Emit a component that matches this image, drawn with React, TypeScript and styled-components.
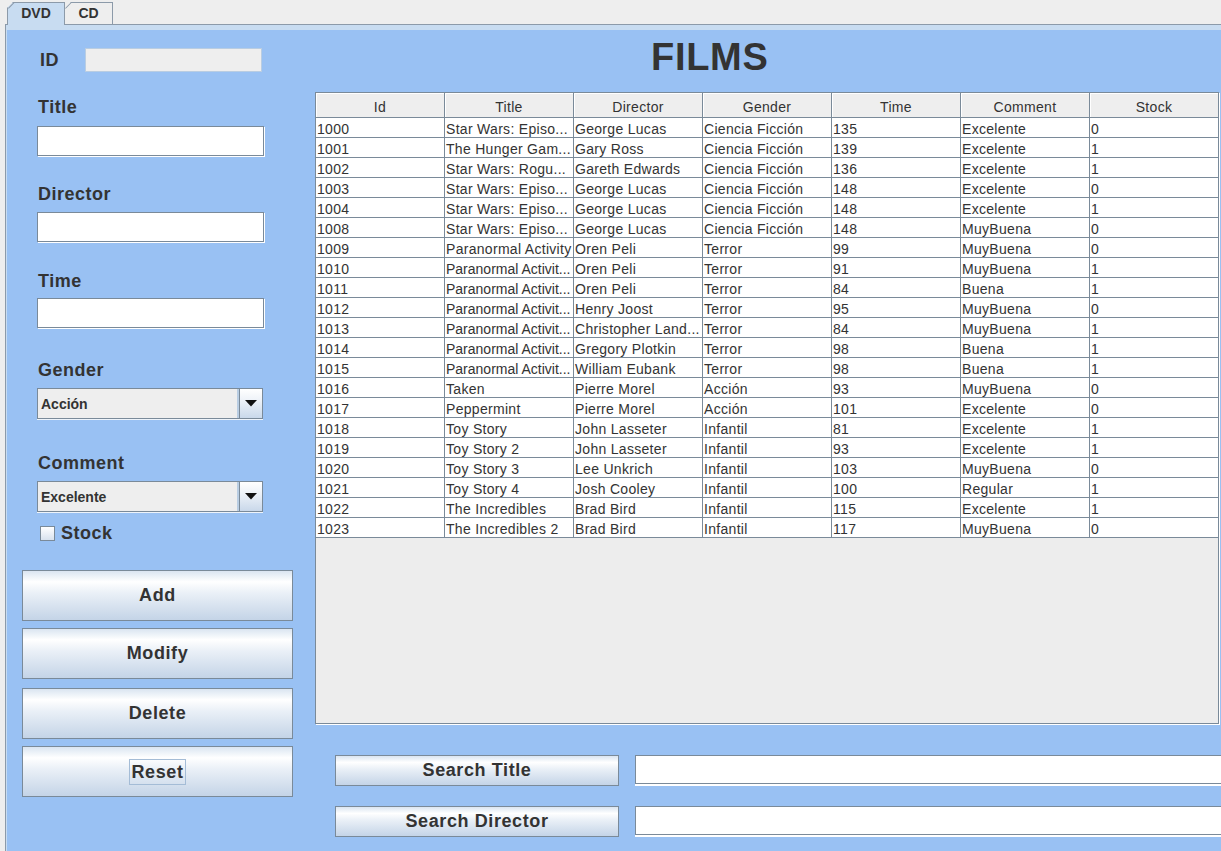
import React from "react";
import styled, { createGlobalStyle } from "styled-components";

const GlobalStyle = createGlobalStyle`
  html, body { margin: 0; padding: 0; background: #eeeeee; }
  body { font-family: "Liberation Sans", Arial, sans-serif; color: #333333; }
  * { box-sizing: border-box; }
`;

const LINE = "#7a8a99";
const BLUE = "#99c1f3";
const BAND = "#c8dcf1";

const Page = styled.div`
  width: 1221px;
  height: 851px;
  overflow: hidden;
  background: #eeeeee;
  display: flex;
  flex-direction: column;
`;

const TabStrip = styled.div`
  height: 24px;
  display: flex;
  align-items: flex-end;
  padding-left: 7px;
  flex: none;
`;

const Tab = styled.div<{ $selected?: boolean; $w: number }>`
  position: relative;
  width: ${(p) => p.$w}px;
  height: ${(p) => (p.$selected ? 23 : 22)}px;
  margin-bottom: ${(p) => (p.$selected ? -1 : 0)}px;
  z-index: ${(p) => (p.$selected ? 2 : 1)};
  background: ${(p) => (p.$selected ? BAND : "#eeeeee")};
  border: 1px solid #8c9aa9;
  border-bottom: none;
  border-left-width: ${(p) => (p.$selected ? 1 : 0)}px;
  clip-path: polygon(6px 0, 100% 0, 100% 100%, 0 100%, 0 6px);
  font-size: 14px;
  font-weight: bold;
  line-height: 20px;
  text-align: center;
  color: #333333;
  &::before {
    content: "";
    position: absolute;
    left: 0;
    top: 5px;
    width: 8px;
    height: 1px;
    background: #8c9aa9;
    transform-origin: 0 0;
    transform: rotate(-45deg);
  }
`;

const Panel = styled.div`
  margin-left: 5px;
  border-top: 1px solid #8c9aa9;
  border-left: 1px solid #8c9aa9;
  background: ${BAND};
  padding: 5px 0 0 1px;
  flex: 1;
  display: flex;
  min-height: 0;
`;

const Surface = styled.div`
  flex: 1;
  background: ${BLUE};
  display: grid;
  grid-template-columns: 286px 1fr;
  overflow: hidden;
`;

const FormColumn = styled.div`
  display: flex;
  flex-direction: column;
  padding-left: 15px;
`;

const IdRow = styled.div`
  margin-top: 18px;
  margin-left: 18px;
  height: 24px;
  display: flex;
  align-items: center;
`;

const IdLabel = styled.span`
  width: 45px;
  font-size: 18px;
  font-weight: bold;
  letter-spacing: 0.5px;
  color: #333333;
`;

const IdField = styled.div`
  width: 177px;
  height: 24px;
  background: #eeeeee;
  border: 1px solid #b9cde2;
`;

const FieldLabel = styled.div<{ $mt: number }>`
  margin-top: ${(p) => p.$mt}px;
  margin-left: 15px;
  padding-left: 1px;
  height: 20px;
  line-height: 20px;
  font-size: 18px;
  font-weight: bold;
  letter-spacing: 0.5px;
  color: #333333;
`;

const TextField = styled.div<{ $mt: number }>`
  margin-top: ${(p) => p.$mt}px;
  margin-left: 15px;
  width: 227px;
  height: 30px;
  background: #ffffff;
  border: 1px solid ${LINE};
  box-shadow: 1px 1px 0 #ffffff;
`;

const Combo = styled.div<{ $mt: number }>`
  margin-top: ${(p) => p.$mt}px;
  margin-left: 15px;
  width: 226px;
  height: 31px;
  display: flex;
  border: 1px solid ${LINE};
  background: #eeeeee;
  box-shadow: 0 1px 0 #eef4fb;
`;

const ComboValue = styled.div`
  flex: 1;
  padding-left: 3px;
  display: flex;
  align-items: center;
  font-size: 14px;
  font-weight: bold;
  color: #333333;
  border-right: 2px solid #b9cde2;
`;

const ComboArrow = styled.div`
  width: 23px;
  display: flex;
  align-items: center;
  justify-content: center;
  border-left: 1px solid ${LINE};
  background: linear-gradient(to bottom, #ffffff 0%, #edf2f8 40%, #c9d8ea 100%);
`;

const CheckRow = styled.div`
  margin-top: 11px;
  margin-left: 18px;
  height: 20px;
  display: flex;
  align-items: center;
  gap: 6px;
`;

const CheckBox = styled.div`
  width: 15px;
  height: 15px;
  border: 1px solid ${LINE};
  background: linear-gradient(to bottom, #ffffff, #d8e2ee);
`;

const CheckLabel = styled.span`
  font-size: 18px;
  font-weight: bold;
  letter-spacing: 0.5px;
  color: #333333;
`;

const buttonGradient = `linear-gradient(to bottom, #dae5f1 0%, #ffffff 22%, #eaf0f7 45%, #c4d4e7 100%)`;

const ActionButton = styled.div<{ $mt: number }>`
  margin-top: ${(p) => p.$mt}px;
  width: 271px;
  height: 51px;
  border: 1px solid ${LINE};
  background: ${buttonGradient};
  display: flex;
  align-items: center;
  justify-content: center;
  font-size: 18px;
  font-weight: bold;
  letter-spacing: 0.6px;
  color: #333333;
`;

const FocusText = styled.span`
  display: inline-block;
  border: 1px solid #a4bcd6;
  padding: 0 1px;
  line-height: 24px;
`;

const MainColumn = styled.div`
  display: flex;
  flex-direction: column;
  padding-left: 22px;
  min-width: 0;
`;

const Heading = styled.div`
  margin-top: 5px;
  padding-left: 336px;
  height: 44px;
  line-height: 44px;
  font-size: 38px;
  font-weight: bold;
  letter-spacing: 0.7px;
  color: #333333;
`;

const TableBox = styled.div`
  margin-top: 13px;
  width: 904px;
  height: 632px;
  border: 1px solid ${LINE};
  background: #ededed;
  box-shadow: 1px 1px 0 #ffffff;
  display: flex;
  flex-direction: column;
`;

const COLS = "repeat(6, 129px) 128px";

const HeaderRow = styled.div`
  display: grid;
  grid-template-columns: ${COLS};
  height: 25px;
  border-bottom: 1px solid ${LINE};
  background: #eeeeee;
`;

const HeaderCell = styled.div<{ $last?: boolean }>`
  border-right: ${(p) => (p.$last ? "none" : `1px solid ${LINE}`)};
  box-shadow: inset 1px 1px 0 #ffffff;
  text-align: center;
  font-size: 14px;
  letter-spacing: 0.3px;
  line-height: 20px;
  padding-top: 4px;
  color: #333333;
`;

const BodyRow = styled.div`
  display: grid;
  grid-template-columns: ${COLS};
  height: 20px;
  border-bottom: 1px solid ${LINE};
  background: #ffffff;
`;

const Cell = styled.div<{ $last?: boolean; $tight?: boolean }>`
  border-right: ${(p) => (p.$last ? "none" : `1px solid ${LINE}`)};
  padding: 3px 0 0 1px;
  font-size: 14px;
  letter-spacing: ${(p) => (p.$tight ? "0" : "0.3px")};
  line-height: 16px;
  white-space: nowrap;
  overflow: hidden;
  color: #333333;
`;

const SearchRow = styled.div<{ $mt: number }>`
  margin-top: ${(p) => p.$mt}px;
  margin-left: 20px;
  display: flex;
  gap: 16px;
  height: 31px;
`;

const SearchButton = styled.div`
  flex: none;
  width: 284px;
  height: 31px;
  border: 1px solid ${LINE};
  background: ${buttonGradient};
  display: flex;
  align-items: center;
  justify-content: center;
  font-size: 18px;
  font-weight: bold;
  letter-spacing: 0.6px;
  color: #333333;
`;

const SearchField = styled.div`
  flex: none;
  width: 700px;
  height: 29px;
  background: #ffffff;
  border: 1px solid ${LINE};
  border-right: none;
  box-shadow: 0 2px 0 #ffffff;
`;

const headers = ["Id", "Title", "Director", "Gender", "Time", "Comment", "Stock"];

const rows: string[][] = [
  ["1000", "Star Wars: Episo...", "George Lucas", "Ciencia Ficción", "135", "Excelente", "0"],
  ["1001", "The Hunger Gam...", "Gary Ross", "Ciencia Ficción", "139", "Excelente", "1"],
  ["1002", "Star Wars: Rogu...", "Gareth Edwards", "Ciencia Ficción", "136", "Excelente", "1"],
  ["1003", "Star Wars: Episo...", "George Lucas", "Ciencia Ficción", "148", "Excelente", "0"],
  ["1004", "Star Wars: Episo...", "George Lucas", "Ciencia Ficción", "148", "Excelente", "1"],
  ["1008", "Star Wars: Episo...", "George Lucas", "Ciencia Ficción", "148", "MuyBuena", "0"],
  ["1009", "Paranormal Activity", "Oren Peli", "Terror", "99", "MuyBuena", "0"],
  ["1010", "Paranormal Activit...", "Oren Peli", "Terror", "91", "MuyBuena", "1"],
  ["1011", "Paranormal Activit...", "Oren Peli", "Terror", "84", "Buena", "1"],
  ["1012", "Paranormal Activit...", "Henry Joost", "Terror", "95", "MuyBuena", "0"],
  ["1013", "Paranormal Activit...", "Christopher Land...", "Terror", "84", "MuyBuena", "1"],
  ["1014", "Paranormal Activit...", "Gregory Plotkin", "Terror", "98", "Buena", "1"],
  ["1015", "Paranormal Activit...", "William Eubank", "Terror", "98", "Buena", "1"],
  ["1016", "Taken", "Pierre Morel", "Acción", "93", "MuyBuena", "0"],
  ["1017", "Peppermint", "Pierre Morel", "Acción", "101", "Excelente", "0"],
  ["1018", "Toy Story", "John Lasseter", "Infantil", "81", "Excelente", "1"],
  ["1019", "Toy Story 2", "John Lasseter", "Infantil", "93", "Excelente", "1"],
  ["1020", "Toy Story 3", "Lee Unkrich", "Infantil", "103", "MuyBuena", "0"],
  ["1021", "Toy Story 4", "Josh Cooley", "Infantil", "100", "Regular", "1"],
  ["1022", "The Incredibles", "Brad Bird", "Infantil", "115", "Excelente", "1"],
  ["1023", "The Incredibles 2", "Brad Bird", "Infantil", "117", "MuyBuena", "0"],
];

const Arrow = () => (
  <svg width="12" height="7" viewBox="0 0 12 7">
    <polygon points="0,0 12,0 6,6.5" fill="#111111" />
  </svg>
);

export default function App() {
  return (
    <>
      <GlobalStyle />
      <Page>
        <TabStrip>
          <Tab $selected $w={58}>DVD</Tab>
          <Tab $w={48}>CD</Tab>
        </TabStrip>
        <Panel>
          <Surface>
            <FormColumn>
              <IdRow>
                <IdLabel>ID</IdLabel>
                <IdField />
              </IdRow>
              <FieldLabel $mt={25}>Title</FieldLabel>
              <TextField $mt={9} />
              <FieldLabel $mt={28}>Director</FieldLabel>
              <TextField $mt={8} />
              <FieldLabel $mt={29}>Time</FieldLabel>
              <TextField $mt={7} />
              <FieldLabel $mt={32}>Gender</FieldLabel>
              <Combo $mt={8}>
                <ComboValue>Acción</ComboValue>
                <ComboArrow><Arrow /></ComboArrow>
              </Combo>
              <FieldLabel $mt={34}>Comment</FieldLabel>
              <Combo $mt={8}>
                <ComboValue>Excelente</ComboValue>
                <ComboArrow><Arrow /></ComboArrow>
              </Combo>
              <CheckRow>
                <CheckBox />
                <CheckLabel>Stock</CheckLabel>
              </CheckRow>
              <ActionButton $mt={27}>Add</ActionButton>
              <ActionButton $mt={7}>Modify</ActionButton>
              <ActionButton $mt={9}>Delete</ActionButton>
              <ActionButton $mt={7}>
                <FocusText>Reset</FocusText>
              </ActionButton>
            </FormColumn>
            <MainColumn>
              <Heading>FILMS</Heading>
              <TableBox>
                <HeaderRow>
                  {headers.map((h, i) => (
                    <HeaderCell key={h} $last={i === headers.length - 1}>{h}</HeaderCell>
                  ))}
                </HeaderRow>
                {rows.map((r) => (
                  <BodyRow key={r[0]}>
                    {r.map((c, i) => (
                      <Cell key={i} $last={i === r.length - 1} $tight={c.length > 19}>{c}</Cell>
                    ))}
                  </BodyRow>
                ))}
              </TableBox>
              <SearchRow $mt={31}>
                <SearchButton>Search Title</SearchButton>
                <SearchField />
              </SearchRow>
              <SearchRow $mt={20}>
                <SearchButton>Search Director</SearchButton>
                <SearchField />
              </SearchRow>
            </MainColumn>
          </Surface>
        </Panel>
      </Page>
    </>
  );
}
